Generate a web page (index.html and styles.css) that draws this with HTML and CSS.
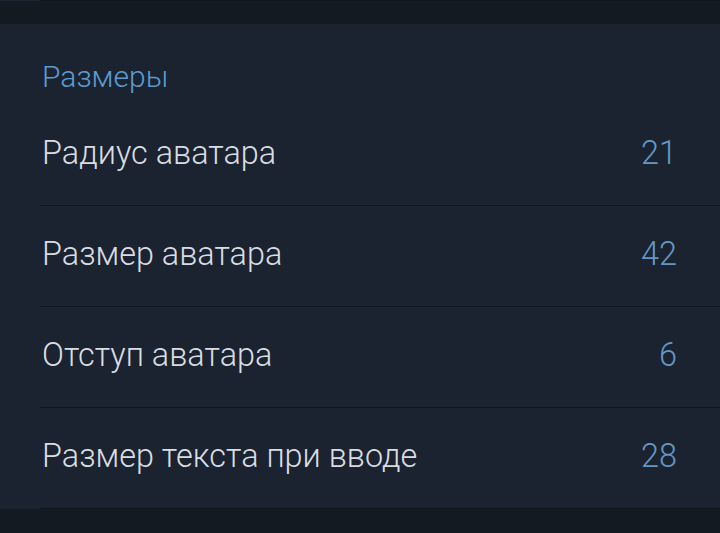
FILE: index.html
```html
<!DOCTYPE html>
<html lang="ru">
<head>
  <meta charset="UTF-8" />
  <title>Размеры</title>
  <link rel="stylesheet" href="styles.css">
</head>
<body>
  <div class="prev">
    <div class="divider"></div>
  </div>
  <div class="gap"></div>

  <div class="section">
    <div class="header">Размеры</div>
    <div class="row">
      <span class="label">Радиус аватара</span>
      <span class="value">21</span>
    </div>
    <div class="row">
      <span class="label">Размер аватара</span>
      <span class="value">42</span>
    </div>
    <div class="row">
      <span class="label">Отступ аватара</span>
      <span class="value">6</span>
    </div>
    <div class="row">
      <span class="label">Размер текста при вводе</span>
      <span class="value">28</span>
    </div>
  </div>

  <div class="gap"></div>
</body>
</html>
```

FILE: styles.css
```css
* { box-sizing: border-box; }
body {
  font-family: Roboto, 'Noto Sans', sans-serif;
  font-weight: 300;
  margin: 0;
  padding: 0;
  background: #131a21;
  color: #d9dde2;
}
.prev {
  background: #1b2330;
  padding-left: 40px;
}
.divider {
  height: 1px;
  background: #10161d;
}
.gap {
  height: 23px;
  background: #131a21;
}
.section {
  background: #1b2330;
}
.header {
  height: 81px;
  padding: 35px 42px 0;
  font-size: 30px;
  line-height: 36px;
  color: #5b9bd1;
}
.row {
  height: 101px;
  margin-left: 40px;
  padding: 0 43px 4px 2px;
  display: flex;
  align-items: center;
  justify-content: space-between;
  border-bottom: 1px solid #10161d;
  font-size: 32.4px;
}
.value {
  color: #6497c6;
}
```
